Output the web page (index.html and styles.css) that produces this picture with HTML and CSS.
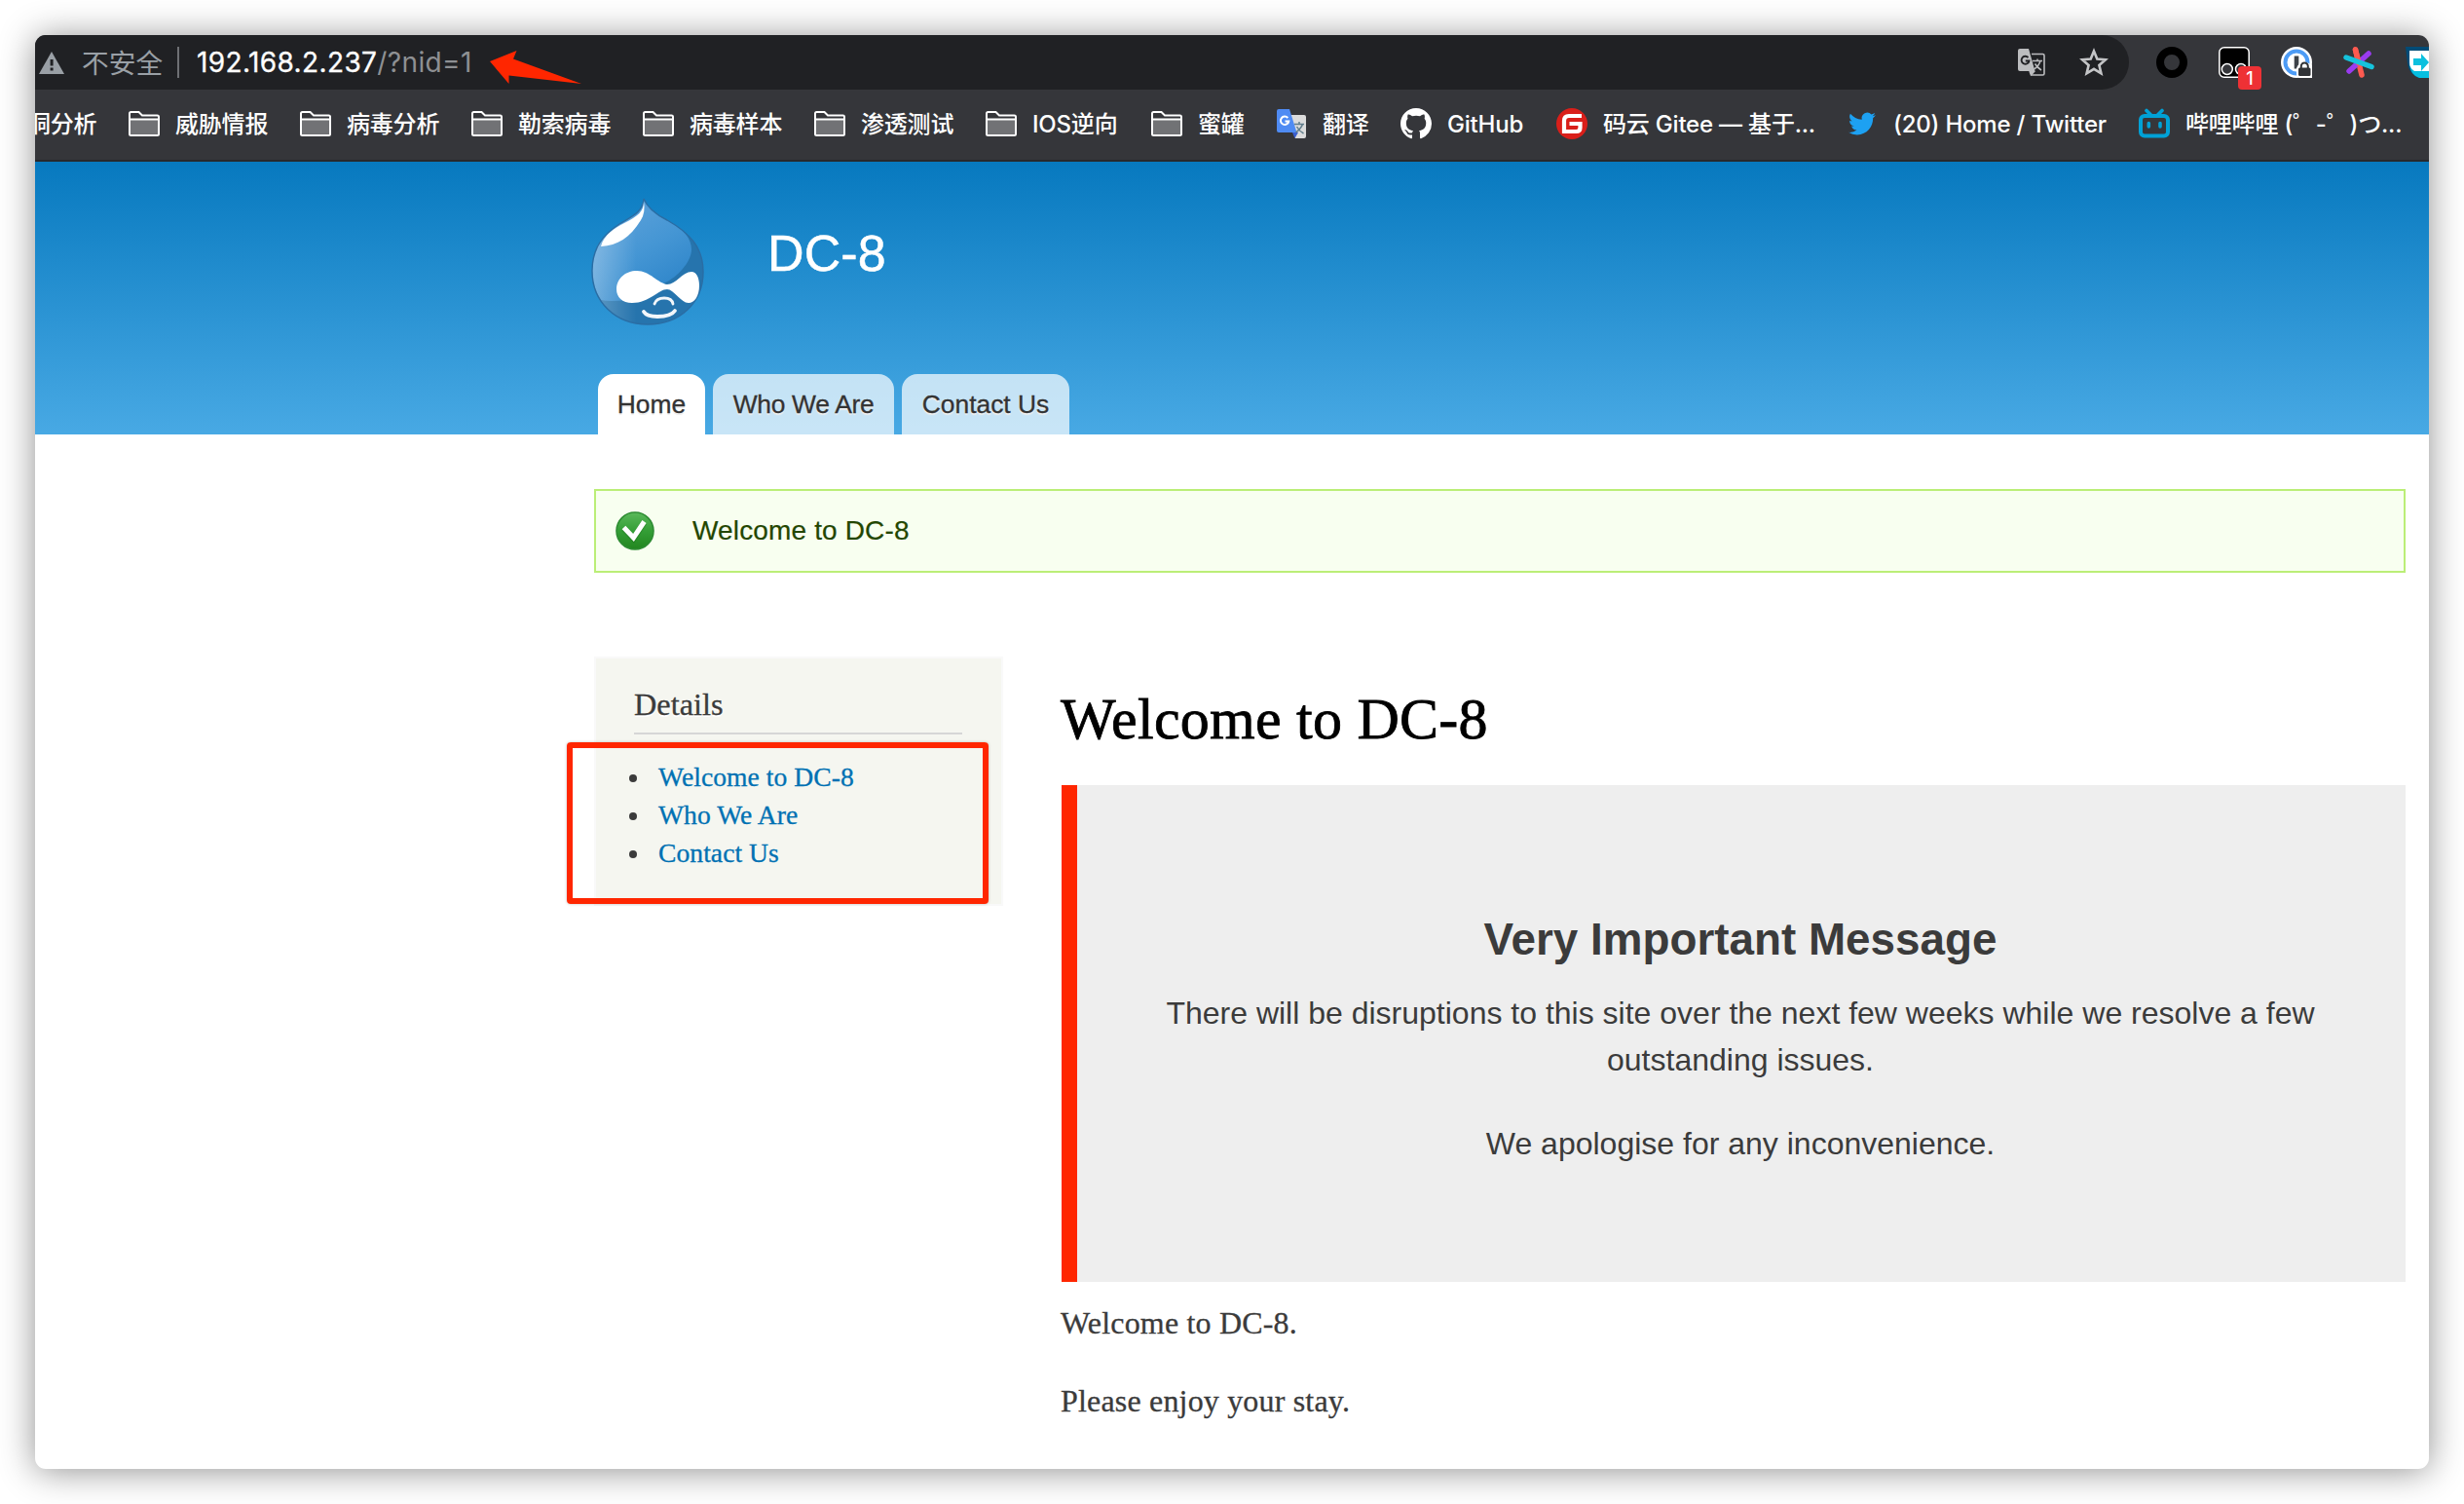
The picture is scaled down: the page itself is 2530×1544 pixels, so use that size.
FILE: index.html
```html
<!DOCTYPE html>
<html lang="zh-CN">
<head>
<meta charset="utf-8">
<title>Welcome to DC-8 | DC-8</title>
<link rel="stylesheet" href="styles.css">
</head>
<body>
<svg width="0" height="0" class="defs" aria-hidden="true">
  <symbol id="folder" viewBox="0 0 32 26">
    <rect x="2" y="8" width="28" height="16" fill="#717275"/>
    <path d="M1 24V2.500Q1 1 2.500 1H10.500L14 4.500H29.500Q31 4.500 31 6V23.500Q31 25 29.500 25H2.500Q1 25 1 23.500M1 8.500H31" fill="none" stroke="#fff" stroke-width="2"/>
  </symbol>
</svg>
<div class="window">
  <div class="toolbar">
    <div class="omnibox">
      <svg class="warn" viewBox="0 0 26 23"><path d="M13 0L26 23H0Z" fill="#9aa0a6"/><path d="M11.600 8h3v6.500h-3zM11.600 16.500h3v3h-3z" fill="#202124"/></svg>
      <span class="insecure">不安全</span>
      <span class="sep"></span>
      <span class="url"><b>192.168.2.237</b><i>/?nid=1</i></span>
      <svg class="translate" viewBox="0 0 28 28"><path d="M14 5.500H25.500Q27 5.500 27 7V25.500Q27 27 25.500 27H13.500L12 23" fill="none" stroke="#bcbdbf" stroke-width="1.600"/><path d="M2 0H11L17.500 23H2Q0 23 0 21V2Q0 0 2 0Z" fill="#bcbdbf"/><path d="M12 23h6l-4.500 5z" fill="#bcbdbf"/><path d="M10.500 9A4 4 0 1 0 11.500 12.500H7.800" fill="none" stroke="#202124" stroke-width="1.900"/><path d="M15 12.500H25M20 10.500V12.500M23 12.500Q21.500 18 16.500 21M17.500 15.500Q20 19.500 24 22" fill="none" stroke="#bcbdbf" stroke-width="1.500"/></svg>
      <svg class="star" viewBox="0 0 30 30"><path d="M15 3.500L18.300 11.500L27 12.200L20.400 17.900L22.400 26.300L15 21.800L7.600 26.300L9.600 17.900L3 12.200L11.700 11.500Z" fill="none" stroke="#c4c5c7" stroke-width="2.600"/></svg>
    </div>
    <div class="extensions">
      <svg viewBox="0 0 32 32"><circle cx="16" cy="16" r="12" fill="none" stroke="#000" stroke-width="8"/></svg>
      <div class="monkey">
        <svg viewBox="0 0 32 32"><rect x=".8" y=".8" width="30.400" height="30.400" rx="5" fill="#000" stroke="#fff" stroke-width="1.500"/><circle cx="8.800" cy="23" r="5.500" fill="#35363a" stroke="#fff" stroke-width="1.500"/><circle cx="23" cy="23" r="5.500" fill="#35363a" stroke="#fff" stroke-width="1.500"/></svg>
        <span class="badge">1</span>
      </div>
      <svg viewBox="0 0 32 32"><circle cx="16" cy="16" r="16" fill="#fff"/><rect x="17" y="17" width="15" height="15" rx="3" fill="#fff"/><circle cx="16" cy="16" r="11.500" fill="none" stroke="#4c9bf5" stroke-width="4"/><rect x="13.700" y="9.500" width="4.600" height="13" fill="#3d4248"/><path d="M16 22Q18 16 24 16Q30 16 32 21V32H20Q16 31 16 28Z" fill="#fff"/><rect x="18" y="21.500" width="12.500" height="8.500" rx="1.500" fill="#303236"/><path d="M20.800 22V20a3.500 3.500 0 0 1 7 0v2" fill="none" stroke="#303236" stroke-width="2"/></svg>
      <svg viewBox="0 0 32 32"><g stroke-width="5.500" stroke-linecap="round"><path d="M12.500 3L19 29" stroke="#ff5a50"/><path d="M26 7L6 25" stroke="#9a3bf0"/><path d="M12.500 3L16 17" stroke="#ff5a50"/><path d="M3 11L29 20.500" stroke="#16c3dc"/></g></svg>
      <svg viewBox="0 0 32 32"><path d="M0 0H32V32H14Q3 28 2 17Z" fill="#004b76"/><path d="M4 8H32V32H14Q5 29 4 18Z" fill="#06bfe0"/><path d="M4 4H32V25H9Q4 22 4 16Z" fill="#fff"/><path d="M8 12h8V7l8 9-8 9v-6H8z" fill="#0bc0de"/></svg>
    </div>
  </div>

  <div class="bookmarks">
    <div class="bm">洞分析</div>
    <div class="bm"><svg class="fold"><use href="#folder"/></svg>威胁情报</div>
    <div class="bm"><svg class="fold"><use href="#folder"/></svg>病毒分析</div>
    <div class="bm"><svg class="fold"><use href="#folder"/></svg>勒索病毒</div>
    <div class="bm"><svg class="fold"><use href="#folder"/></svg>病毒样本</div>
    <div class="bm"><svg class="fold"><use href="#folder"/></svg>渗透测试</div>
    <div class="bm"><svg class="fold"><use href="#folder"/></svg>IOS逆向</div>
    <div class="bm"><svg class="fold"><use href="#folder"/></svg>蜜罐</div>
    <div class="bm"><svg class="fav" viewBox="0 0 32 32"><path d="M12 7H29Q31 7 31 9V29Q31 31 29 31H20Z" fill="#dcdcdc"/><path d="M17 25h6l-3.500 6z" fill="#3a5fd0"/><path d="M3 1H14L21.500 25H3Q1 25 1 23V3Q1 1 3 1Z" fill="#4f8bf3"/><path d="M12.300 10A4.200 4.200 0 1 0 13.300 13.500H9.500" fill="none" stroke="#fff" stroke-width="2"/><path d="M19 16.500H29M24 14V16.500M27.500 16.500Q26 21 20.500 25M21.500 19Q24 23.500 28.500 26" fill="none" stroke="#607d8b" stroke-width="1.500"/></svg>翻译</div>
    <div class="bm"><svg class="fav" viewBox="0 0 16 16"><path fill="#fff" d="M8 0C3.580 0 0 3.580 0 8c0 3.540 2.290 6.530 5.470 7.590.4.070.55-.17.55-.38 0-.19-.01-.82-.01-1.490-2.010.37-2.530-.49-2.690-.94-.09-.23-.48-.94-.82-1.130-.28-.15-.68-.52-.01-.53.63-.01 1.080.58 1.230.82.72 1.210 1.870.87 2.330.66.070-.52.280-.87.510-1.070-1.780-.2-3.640-.89-3.640-3.950 0-.87.310-1.590.82-2.150-.08-.2-.36-1.020.08-2.120 0 0 .67-.21 2.200.82.640-.18 1.320-.27 2-.27s1.360.09 2 .27c1.530-1.040 2.200-.82 2.200-.82.440 1.100.160 1.920.080 2.120.510.560.820 1.270.820 2.150 0 3.070-1.870 3.750-3.650 3.950.290.250.540.730.540 1.480 0 1.070-.01 1.930-.01 2.200 0 .210.150.460.550.380A8.010 8.010 0 0 0 16 8c0-4.420-3.580-8-8-8z"/></svg>GitHub</div>
    <div class="bm"><svg class="fav" viewBox="0 0 32 32"><circle cx="16" cy="16" r="16" fill="#d91f1a"/><path d="M26 8H13Q8 8 8 13V24H20.500Q24.500 24 24.500 20V16H13.500" fill="none" stroke="#fff" stroke-width="4.200"/></svg>码云 Gitee — 基于...</div>
    <div class="bm"><svg class="fav" viewBox="0 0 24 24"><path transform="translate(1.500 1.500) scale(.875)" fill="#1da1f2" d="M23.950 4.570a10 10 0 0 1-2.820.77 4.960 4.960 0 0 0 2.160-2.720c-.95.550-2 .96-3.130 1.180a4.920 4.920 0 0 0-8.380 4.480C7.690 8.100 4.070 6.130 1.640 3.160a4.820 4.820 0 0 0-.67 2.480c0 1.710.87 3.210 2.190 4.100a4.900 4.900 0 0 1-2.230-.62v.06a4.920 4.920 0 0 0 3.950 4.830 5 5 0 0 1-2.210.08 4.940 4.940 0 0 0 4.600 3.420A9.870 9.870 0 0 1 0 19.540a13.990 13.990 0 0 0 7.550 2.210c9.050 0 14-7.500 14-13.980 0-.21 0-.42-.02-.63a9.940 9.940 0 0 0 2.460-2.550z"/></svg>(20) Home / Twitter</div>
    <div class="bm"><svg class="fav" viewBox="0 0 32 32"><rect x="2" y="8" width="28" height="20.500" rx="4" fill="none" stroke="#00a1d6" stroke-width="4"/><path d="M8 2.500L12.500 7M24 2.500L19.500 7" stroke="#00a1d6" stroke-width="3.600" stroke-linecap="round"/><path d="M10.300 15.500v3.500M22 15.500v3.500" stroke="#00a1d6" stroke-width="3.600" stroke-linecap="round"/></svg>哔哩哔哩 (゜-゜)つ...</div>
  </div>

  <header class="site-header">
    <div class="brand">
      <svg class="drop" viewBox="0 0 116 132">
        <defs>
          <linearGradient id="body" x1="0" y1="0" x2=".6" y2="1"><stop offset="0" stop-color="#65a5dc"/><stop offset=".6" stop-color="#4596d4"/><stop offset="1" stop-color="#2f86ca"/></linearGradient>
          <linearGradient id="edge" x1="0" x2="1"><stop offset="0" stop-color="#fff" stop-opacity=".28"/><stop offset=".4" stop-color="#fff" stop-opacity="0"/></linearGradient>
          <linearGradient id="shine" x1=".8" y1="1" x2=".3" y2=".3"><stop offset="0" stop-color="#fff" stop-opacity=".2"/><stop offset=".35" stop-color="#fff"/></linearGradient>
        </defs>
        <path d="M54 2C58 12 66 18 78 24C101 37 115 52 115 77C115 109 91 131 58 131C25 131 1 108 1 76C1 53 12 39 29 28C42 20 53 16 54 2Z" fill="#2674ad"/>
        <path d="M54 2C58 12 66 18 78 24C95 33 103 43 103 54C103 67 88 83 76 88C70 92 50 100 38 106Q18 108 10 106Q1 92 1 76C1 53 12 39 29 28C42 20 53 16 54 2Z" fill="url(#body)"/>
        <path d="M54 2C58 12 66 18 78 24C101 37 115 52 115 77C115 109 91 131 58 131C25 131 1 108 1 76C1 53 12 39 29 28C42 20 53 16 54 2Z" fill="url(#edge)" stroke="#2a6da4" stroke-width="1.400"/>
        <path d="M54 5Q56 16 51 24C40 42 27 50 10 51C13 39 24 32 34 27C48 20 54 15 54 5Z" fill="url(#shine)"/>
        <path d="M47 76C60 76 69 89 78 90C87 90 94 77 103 77C108 77 111 83 111 91C111 102 106 109 100 109C92 109 85 95 78 95C69 95 60 109 42 109C32 109 26 103 26 95C26 84 35 76 47 76Z" fill="#fff"/>
        <path d="M65 110Q67 104 75 104Q83 104 84 110" fill="none" stroke="#f2f6fa" stroke-width="2.800" stroke-linecap="round"/>
        <path d="M54 118Q57 123 68 123Q82 123 86 117" fill="none" stroke="#f2f6fa" stroke-width="3.800" stroke-linecap="round"/>
      </svg>
      <div class="site-name">DC-8</div>
    </div>
    <nav class="tabs"><a class="active">Home</a><a class="t2">Who We Are</a><a class="t3">Contact Us</a></nav>
  </header>

  <main class="page">
    <div class="status">
      <svg viewBox="0 0 40 40"><defs><linearGradient id="ok" x1="0" y1="0" x2="0" y2="1"><stop offset="0" stop-color="#5ab95a"/><stop offset=".5" stop-color="#349e36"/><stop offset="1" stop-color="#22861f"/></linearGradient></defs><circle cx="20" cy="20" r="19" fill="url(#ok)" stroke="#2e8c33" stroke-width="1.600"/><path d="M8.500 18L18.500 28L29.500 11.500" fill="none" stroke="#1d6e1d" stroke-opacity=".35" stroke-width="6"/><path d="M8.500 16.500L18.500 27L29.500 10.500" fill="none" stroke="#fff" stroke-width="5"/></svg>
      <span>Welcome to DC-8</span>
    </div>
    <div class="columns">
      <aside class="block">
        <h2>Details</h2>
        <ul><li><a>Welcome to DC-8</a></li><li><a>Who We Are</a></li><li><a>Contact Us</a></li></ul>
        <div class="mark"></div>
      </aside>
      <article>
        <h1>Welcome to DC-8</h1>
        <div class="notice">
          <h3>Very Important Message</h3>
          <p>There will be disruptions to this site over the next few weeks while we resolve a few<br>outstanding issues.</p>
          <p>We apologise for any inconvenience.</p>
        </div>
        <p class="text">Welcome to DC-8.</p>
        <p class="text">Please enjoy your stay.</p>
      </article>
    </div>
  </main>
  <svg class="arrow" viewBox="0 0 96 36"><path d="M1 12L28.500 1L25 9.500L95 35L20.500 26.500V35Z" fill="#ff2600"/></svg>
</div>
</body>
</html>
```
FILE: styles.css
```css
* { box-sizing: border-box; }
body { margin: 0; height: 1544px; padding: 36px; background: #fff; overflow: hidden; }
.defs { position: absolute; }
svg { display: block; flex: none; }
.window { position: relative; width: 2458px; height: 1472px; border-radius: 11px; background: #fff; box-shadow: 0 2px 36px rgba(0,0,0,.44); }

/* browser toolbar */
.toolbar { display: flex; height: 56px; background: #35363a; border-radius: 11px 11px 0 0; overflow: hidden; font-family: Inter, "Noto Sans CJK SC", sans-serif; }
.omnibox { flex: none; width: 2150px; height: 56px; display: flex; align-items: center; padding: 0 21px 0 4px; background: #202124; border-radius: 0 28px 28px 0; }
.warn { width: 26px; height: 23px; }
.insecure { margin-left: 18px; width: 83px; padding-bottom: 2px; font-size: 27.700px; color: #9aa0a6; white-space: nowrap; }
.sep { width: 2px; height: 32px; margin-left: 15px; background: #6e7074; }
.url { margin-left: 18px; font-size: 28px; letter-spacing: .38px; white-space: nowrap; }
.url b { font-weight: 400; color: #fff; -webkit-text-stroke: .3px #fff; }
.url i { font-style: normal; color: #8e9093; }
.translate { width: 28px; height: 28px; margin-left: auto; }
.star { width: 30px; height: 30px; margin-left: 35px; }
.extensions { flex: none; display: flex; align-items: center; gap: 32px; margin-left: 28px; }
.extensions svg { width: 32px; height: 32px; }
.monkey { position: relative; }
.badge { position: absolute; left: 20px; top: 20px; width: 24px; height: 24px; border-radius: 4px; background: #ee3135; color: #fff; font-size: 18px; font-weight: 500; line-height: 25px; text-align: center; }

/* bookmarks bar */
.bookmarks { display: grid; grid-template-columns: 96px repeat(5, 176px) 170px 128px 128px 160px 298px 300px 298px; height: 74px; background: #35363a; border-bottom: 2px solid #28292c; color: #fff; overflow: hidden; font: 24px/32px Inter, "Noto Sans CJK SC", "Noto Sans CJK JP", sans-serif; }
.bm { display: flex; align-items: center; gap: 16px; white-space: nowrap; letter-spacing: -.2px; font-weight: 450; }
.bm:first-child { margin-left: -8px; }
.fold { width: 32px; height: 26px; margin-top: -2px; }
.fav { width: 32px; height: 32px; margin-top: -2px; }

/* site header */
.site-header { display: flex; flex-direction: column; justify-content: space-between; height: 280px; padding: 36px 0 0 571px; background: linear-gradient(#0779bf, #48a9e4); font-family: "Liberation Sans", Arial, sans-serif; }
.brand { display: flex; gap: 65px; }
.drop { width: 116px; height: 132px; }
.site-name { padding-top: 28px; font-size: 52px; line-height: 60px; color: #fff; letter-spacing: .1px; -webkit-text-stroke: .5px #fff; }
.tabs { display: flex; gap: 8px; padding-left: 7px; }
.tabs a { width: 110px; height: 62px; border-radius: 16px 16px 0 0; background: rgba(255,255,255,.7); font-size: 26.400px; line-height: 62px; text-align: center; color: #333; text-shadow: 0 2px 1px #eee; -webkit-text-stroke: .3px #333; }
.tabs .active { background: #fff; }
.tabs .t2 { width: 186px; letter-spacing: -.3px; }
.tabs .t3 { width: 172px; }

/* page */
.page { padding: 56px 24px 0 574px; }
.status { display: flex; align-items: center; gap: 39px; height: 86px; padding-left: 20px; border: 2px solid #be7; background: #f8fff0; color: #234600; font: 28px/32px "Liberation Sans", Arial, sans-serif; letter-spacing: .15px; -webkit-text-stroke: .2px #234600; }
.status svg { width: 40px; height: 40px; }
.columns { display: flex; gap: 60px; padding-top: 86px; font-family: Georgia, "Liberation Serif", serif; color: #3b3b3b; -webkit-text-stroke: .3px; }
.block { position: relative; flex: none; width: 420px; height: 256px; padding: 26px 40px 26px 39px; border: 2px solid #f9f9f9; background: #f5f6f0; }
.block h2 { margin: 0; height: 52px; padding-top: 1px; border-bottom: 2px solid #d6d6d6; font-size: 32.300px; font-weight: 400; line-height: 41px; text-shadow: 0 2px 0 #fff; }
.block ul { margin: 24px 0 0; padding: 0 0 0 25px; list-style: none; font-size: 27.600px; line-height: 39px; letter-spacing: .05px; }
.block li { display: flex; align-items: center; color: #0071b3; }
.block li::before { content: ""; width: 8px; height: 8px; margin: 3px 22px 0 -30px; border-radius: 50%; background: #3b3b3b; }
.mark { position: absolute; left: -30px; top: 86px; width: 433px; height: 166px; border: 6px solid #ff2600; border-radius: 4px; box-shadow: 0 0 3px rgba(0,0,0,.25); }
article { flex: 1; }
h1 { margin: 32px 0 36px; color: #000; font-size: 60px; font-weight: 400; line-height: 64px; letter-spacing: .25px; text-indent: -1px; -webkit-text-stroke: .8px #000; }
.notice { height: 510px; padding: 128px 2px 0 0; border-left: 16px solid #ff2600; background: #eee; text-align: center; font: 32px/48px "Liberation Sans", Arial, sans-serif; -webkit-text-stroke: 0; }
.notice h3 { margin: 0 0 22px; padding-top: 1px; font-size: 45.800px; line-height: 59px; }
.notice p { margin: 0 0 38px; white-space: nowrap; }
.text { margin: 22px 0 40px; font-size: 32px; line-height: 40px; letter-spacing: .18px; text-indent: -1px; }
.arrow { position: absolute; left: 466px; top: 15px; width: 96px; height: 36px; }
```
